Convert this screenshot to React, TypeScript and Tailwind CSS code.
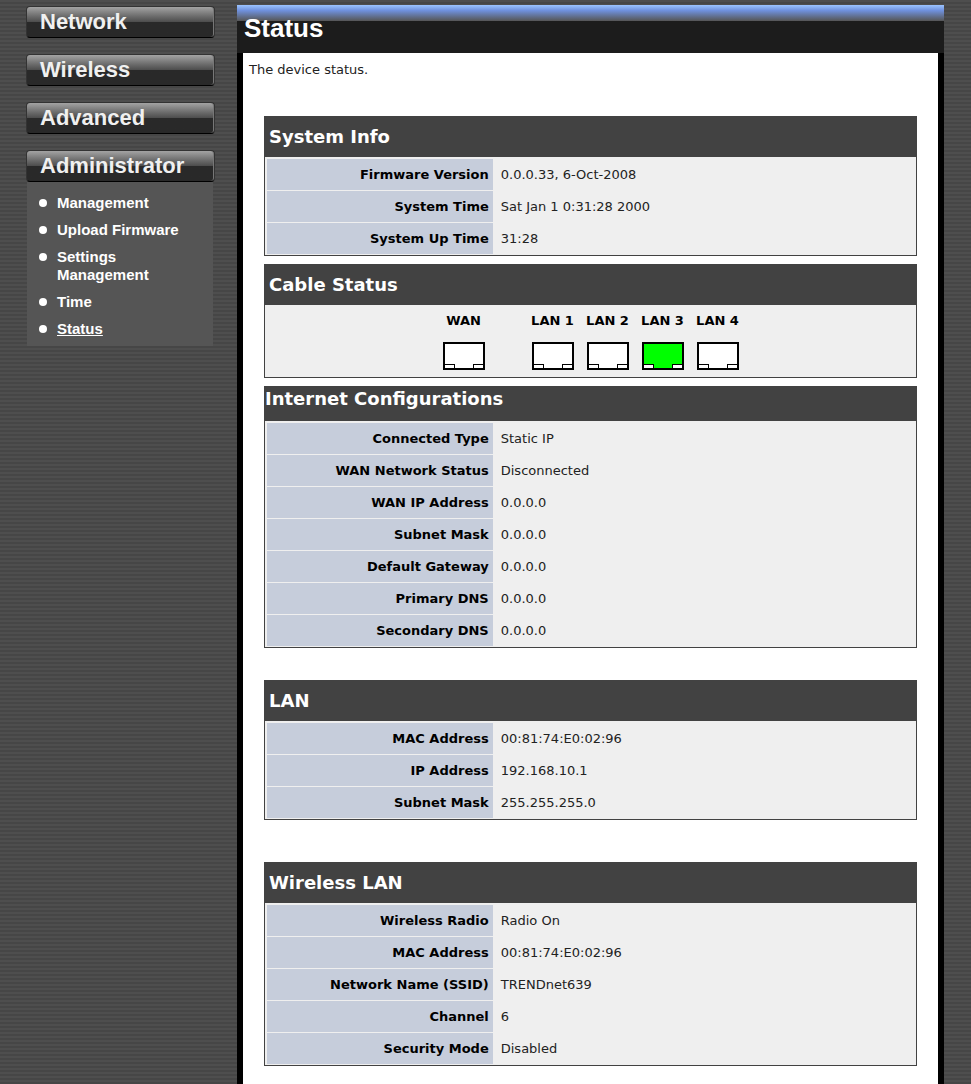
import clsx from "clsx";

type Row = { label: string; value: string };

const menu = ["Network", "Wireless", "Advanced", "Administrator"];

const submenu = ["Management", "Upload Firmware", "Settings Management", "Time", "Status"];

const systemInfo: Row[] = [
	{ label: "Firmware Version", value: "0.0.0.33, 6-Oct-2008" },
	{ label: "System Time", value: "Sat Jan 1 0:31:28 2000" },
	{ label: "System Up Time", value: "31:28" },
];

const internet: Row[] = [
	{ label: "Connected Type", value: "Static IP" },
	{ label: "WAN Network Status", value: "Disconnected" },
	{ label: "WAN IP Address", value: "0.0.0.0" },
	{ label: "Subnet Mask", value: "0.0.0.0" },
	{ label: "Default Gateway", value: "0.0.0.0" },
	{ label: "Primary DNS", value: "0.0.0.0" },
	{ label: "Secondary DNS", value: "0.0.0.0" },
];

const lan: Row[] = [
	{ label: "MAC Address", value: "00:81:74:E0:02:96" },
	{ label: "IP Address", value: "192.168.10.1" },
	{ label: "Subnet Mask", value: "255.255.255.0" },
];

const wirelessLan: Row[] = [
	{ label: "Wireless Radio", value: "Radio On" },
	{ label: "MAC Address", value: "00:81:74:E0:02:96" },
	{ label: "Network Name (SSID)", value: "TRENDnet639" },
	{ label: "Channel", value: "6" },
	{ label: "Security Mode", value: "Disabled" },
];

const ports = [
	{ name: "WAN", up: false },
	{ name: "LAN 1", up: false },
	{ name: "LAN 2", up: false },
	{ name: "LAN 3", up: true },
	{ name: "LAN 4", up: false },
];

function PanelTitle({ title, tight = false }: { title: string; tight?: boolean }) {
	return (
		<h2
			className={clsx(
				"bg-[#424242] text-[18px] leading-6 font-bold text-white",
				tight ? "pb-[10px]" : "px-1 py-2",
			)}
		>
			{title}
		</h2>
	);
}

function InfoPanel({ title, rows, tight }: { title: string; rows: Row[]; tight?: boolean }) {
	return (
		<section className="border border-[#424242] bg-[#efefef]">
			<PanelTitle title={title} tight={tight} />
			<table className="mt-px w-full table-fixed border-separate border-spacing-x-[2px] border-spacing-y-px">
				<tbody>
					{rows.map((row) => (
						<tr key={row.label} className="h-[31px]">
							<th
								scope="row"
								className="w-[35%] bg-[#c6cddb] pr-1 text-right text-[13px] leading-5 font-bold"
							>
								{row.label}
							</th>
							<td className="pl-[6px] text-[13px] leading-5 text-[#222]">{row.value}</td>
						</tr>
					))}
				</tbody>
			</table>
		</section>
	);
}

function PortIcon({ up }: { up: boolean }) {
	return (
		<svg width="42" height="28" viewBox="0 0 42 28" shapeRendering="crispEdges" aria-hidden="true">
			<rect x="1" y="1" width="40" height="26" fill={up ? "#00ff00" : "#fff"} stroke="#000" strokeWidth="2" />
			<path d="M2 22h10v4h-10zM30 22h10v4h-10z" fill="#000" />
			<path d="M2 23h9v3h-9zM31 23h9v3h-9z" fill="#fff" />
		</svg>
	);
}

function CablePanel() {
	return (
		<section className="border border-[#424242] bg-[#efefef]">
			<PanelTitle title="Cable Status" />
			<ul className="flex justify-center gap-[13px] pt-1 pb-[7px]">
				{ports.map((port) => (
					<li
						key={port.name}
						className="flex w-[42px] flex-col items-center gap-[9px] text-[13px] leading-6 font-bold whitespace-nowrap first:mr-[34px]"
					>
						{port.name}
						<PortIcon up={port.up} />
					</li>
				))}
			</ul>
		</section>
	);
}

function Sidebar() {
	return (
		<nav className="w-[237px] shrink-0 pt-[6px] pr-[22px] pl-[26px] font-['Liberation_Sans'] font-bold text-white">
			<div className="flex flex-col gap-4">
				{menu.map((item) => (
					<button
						key={item}
						type="button"
						className="h-8 rounded-sm border border-[#333] border-b-black bg-linear-to-b from-[#a0a0a0] from-5% via-[#4c4c4c] via-50% to-[#292929] to-50% bg-origin-border pl-[13px] text-left text-[22px] leading-7 text-[#f0f0f0] shadow-[inset_-1px_0_#777]"
					>
						{item}
					</button>
				))}
			</div>
			<ul className="mr-[2px] ml-px flex flex-col gap-[9px] bg-[#555] pt-3 pr-5 pb-2 pl-3 text-[15px] leading-[18px]">
				{submenu.map((item) => (
					<li key={item} className="flex gap-[10px]">
						<span className="mt-[5px] size-2 shrink-0 rounded-full bg-white" />
						<a href="#" className={clsx(item === "Status" && "underline", item.startsWith("Settings") && "w-24")}>
							{item}
						</a>
					</li>
				))}
			</ul>
		</nav>
	);
}

export default function App() {
	return (
		<div className="flex min-h-screen bg-[repeating-linear-gradient(#4e4e4e_0px_2px,#464646_2px_4px)] font-['DejaVu_Sans',sans-serif] text-black">
			<Sidebar />
			<div className="mr-[27px] flex grow flex-col pt-[5px]">
				<header className="bg-linear-to-b from-[#9cc4ff] via-[#6f90dc] via-35% to-[#555] bg-[length:100%_16px] bg-no-repeat">
					<h1 className="bg-[linear-gradient(transparent_16px,#1c1c1c_16px)] pt-[6px] pb-2 pl-[7px] font-['Liberation_Sans'] text-[26px] leading-[34px] font-bold text-white">
						Status
					</h1>
				</header>
				<main className="grow border-x-[6px] border-black bg-white pr-[21px] pb-[17px] pl-[21px]">
					<p className="-ml-[15px] pt-2 text-[13px] leading-[18px] text-[#222]">The device status.</p>
					<div className="mt-[37px] flex flex-col gap-2">
						<InfoPanel title="System Info" rows={systemInfo} />
						<CablePanel />
						<InfoPanel title="Internet Configurations" rows={internet} tight />
					</div>
					<div className="mt-8 flex flex-col gap-[42px]">
						<InfoPanel title="LAN" rows={lan} />
						<InfoPanel title="Wireless LAN" rows={wirelessLan} />
					</div>
				</main>
			</div>
		</div>
	);
}
